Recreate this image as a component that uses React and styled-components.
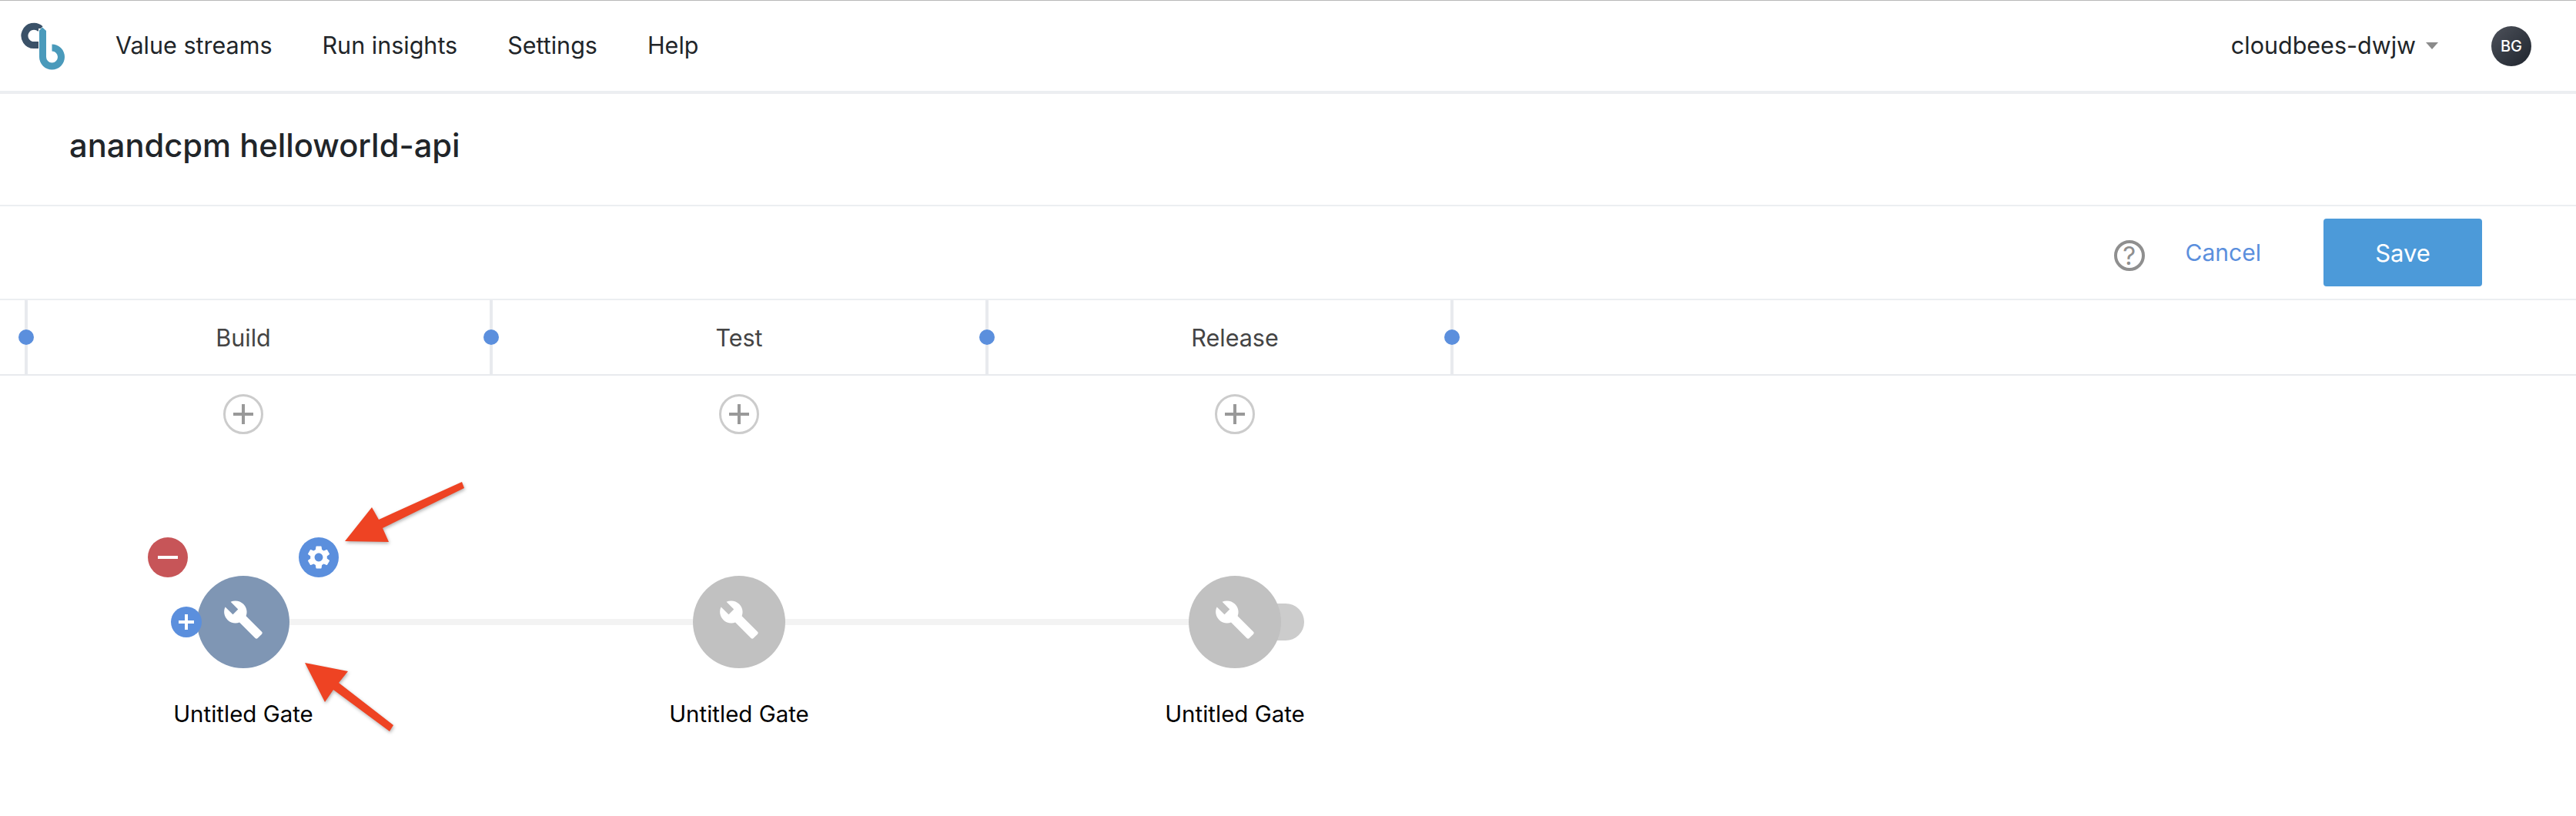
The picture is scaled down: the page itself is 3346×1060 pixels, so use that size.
import styled, { createGlobalStyle } from 'styled-components';

const NAV_ITEMS = ['Value streams', 'Run insights', 'Settings', 'Help'];
const STAGES = [
  { name: 'Build', width: 600, pad: '0 40px 0 0' },
  { name: 'Test', width: 640, pad: '0' },
  { name: 'Release', width: 600, pad: '0 0 0 40px' },
];

const GlobalStyle = createGlobalStyle`
  html, body {
    margin: 0;
    padding: 0;
    background: #fff;
  }
  body {
    font-family: Inter, "Liberation Sans", sans-serif;
    color: #212529;
  }
  * {
    box-sizing: border-box;
  }
`;

function Logo() {
  return (
    <svg width="60" height="64" viewBox="26 30 60 64" fill="none">
      <path d="M52.5 39.5A12.2 12.2 0 1 0 44 60.6H52" stroke="#3a5168" strokeWidth="9" />
      <path d="M55.5 39V76A12 12 0 1 0 67.5 64H62" stroke="#fff" strokeWidth="11" />
      <path d="M51 41.5L55 37.5L60 42V76A7.5 7.5 0 1 0 67.5 68.5V59.5A16.5 16.5 0 1 1 51 76Z" fill="#4a9abb" />
    </svg>
  );
}

function WrenchIcon() {
  return (
    <WrenchSvg width="54" height="54" viewBox="0 0 24 24" fill="#fff">
      <path d="M22.7 19l-9.1-9.1c.9-2.3.4-5-1.5-6.9-2-2-5-2.4-7.4-1.3L9 6 6 9 1.6 4.7C.4 7.1.9 10.1 2.9 12.1c1.9 1.9 4.6 2.4 6.9 1.5l9.1 9.1c.4.4 1 .4 1.4 0l2.3-2.3c.5-.4.5-1.1.1-1.4z" />
    </WrenchSvg>
  );
}

function GearIcon() {
  return (
    <svg width="36" height="36" viewBox="0 0 24 24" fill="#fff">
      <path d="M19.14 12.94c.04-.3.06-.61.06-.94 0-.32-.02-.64-.07-.94l2.03-1.58c.18-.14.23-.41.12-.61l-1.92-3.32c-.12-.22-.37-.29-.59-.22l-2.39.96c-.5-.38-1.03-.7-1.62-.94l-.36-2.54c-.04-.24-.24-.41-.48-.41h-3.84c-.24 0-.43.17-.47.41l-.36 2.54c-.59.24-1.13.57-1.62.94l-2.39-.96c-.22-.08-.47 0-.59.22L2.74 8.87c-.12.21-.08.47.12.61l2.03 1.58c-.05.3-.09.63-.09.94s.02.64.07.94l-2.03 1.58c-.18.14-.23.41-.12.61l1.92 3.32c.12.22.37.29.59.22l2.39-.96c.5.38 1.03.7 1.62.94l.36 2.54c.05.24.24.41.48.41h3.84c.24 0 .44-.17.47-.41l.36-2.54c.59-.24 1.13-.56 1.62-.94l2.39.96c.22.08.47 0 .59-.22l1.92-3.32c.12-.22.07-.47-.12-.61l-2.01-1.58zM12 15.6c-1.98 0-3.6-1.62-3.6-3.6s1.62-3.6 3.6-3.6 3.6 1.62 3.6 3.6-1.62 3.6-3.6 3.6z" />
    </svg>
  );
}

function App() {
  return (
    <Page>
      <GlobalStyle />
      <Header>
        <Logo />
        <Nav>
          {NAV_ITEMS.map((item) => (
            <NavItem key={item}>{item}</NavItem>
          ))}
        </Nav>
        <OrgName>cloudbees-dwjw</OrgName>
        <Caret />
        <Avatar>BG</Avatar>
      </Header>

      <TitleBar>
        <Title>anandcpm helloworld-api</Title>
      </TitleBar>

      <ActionBar>
        <HelpIcon>?</HelpIcon>
        <CancelLink>Cancel</CancelLink>
        <SaveButton type="button">Save</SaveButton>
      </ActionBar>

      <StageBar>
        <Boundary />
        {STAGES.map((stage) => (
          <StageGroup key={stage.name}>
            <StageName $width={stage.width} $pad={stage.pad}>
              {stage.name}
            </StageName>
            <Boundary />
          </StageGroup>
        ))}
      </StageBar>

      <Lanes>
        {STAGES.map((stage, i) => (
          <Lane key={stage.name}>
            <AddGate />
            <GateCircle $active={i === 0} $linked={i < STAGES.length - 1}>
              <WrenchIcon />
              {i === 0 && (
                <>
                  <RemoveBadge />
                  <SettingsBadge>
                    <GearIcon />
                  </SettingsBadge>
                  <PrependBadge />
                </>
              )}
              {i === STAGES.length - 1 && <EndTail />}
            </GateCircle>
            <GateLabel>Untitled Gate</GateLabel>
          </Lane>
        ))}
      </Lanes>

      <Annotations width="3346" height="1060" viewBox="0 0 3346 1060">
        <polygon points="448,703 483,659 492,675 600,626 603,634 497,686 505,704" />
        <polygon points="396,861 452,872 440,887 511,942 506,950 433,896 422,912" />
      </Annotations>
    </Page>
  );
}

const Page = styled.div`
  position: relative;
  isolation: isolate;
  width: 3346px;
  height: 1060px;
  overflow: hidden;
  background: #fff;
`;

const Header = styled.header`
  height: 122px;
  display: flex;
  align-items: center;
  padding: 0 58px 0 26px;
  border-top: 1px solid #b8b8b8;
  border-bottom: 4px solid #eceef1;
`;

const Nav = styled.nav`
  display: flex;
  gap: 65px;
  margin-left: 64px;
  flex: 1;
`;

const NavItem = styled.span`
  font-size: 30.5px;
  line-height: 38px;
  padding-bottom: 2px;
  color: #212529;
`;

const OrgName = styled.span`
  font-size: 30.5px;
  line-height: 38px;
  padding-bottom: 2px;
  color: #212529;
`;

const Caret = styled.span`
  width: 0;
  height: 0;
  margin: 0 69px 0 13px;
  border-left: 8px solid transparent;
  border-right: 8px solid transparent;
  border-top: 9px solid #8b8b8b;
`;

const Avatar = styled.span`
  width: 52px;
  height: 52px;
  display: flex;
  align-items: center;
  justify-content: center;
  border-radius: 50%;
  background: linear-gradient(135deg, #4d515a, #1f252e);
  color: #fff;
  font-size: 20px;
  font-weight: 500;
`;

const TitleBar = styled.div`
  height: 146px;
  display: flex;
  align-items: center;
  padding: 0 0 10px 90px;
  border-bottom: 2px solid #eceef1;
`;

const Title = styled.h1`
  margin: 0;
  font-size: 41.7px;
  font-weight: 500;
  line-height: 50px;
  color: #212529;
`;

const ActionBar = styled.div`
  height: 120px;
  display: flex;
  align-items: center;
  justify-content: flex-end;
  padding-right: 122px;
`;

const HelpIcon = styled.span`
  width: 40px;
  height: 40px;
  display: flex;
  align-items: center;
  justify-content: center;
  margin-right: 53px;
  margin-top: 8px;
  border: 4px solid #8f8f8f;
  border-radius: 50%;
  color: #8f8f8f;
  font-size: 33px;
  line-height: 1;
  font-weight: 400;
`;

const CancelLink = styled.a`
  margin-right: 81px;
  font-size: 30px;
  color: #5b8fdd;
`;

const SaveButton = styled.button`
  width: 206px;
  height: 88px;
  border: none;
  border-radius: 4px;
  background: #4c9ad9;
  color: #fff;
  font-family: inherit;
  font-size: 31px;
  font-weight: 400;
`;

const StageBar = styled.div`
  height: 100px;
  display: flex;
  padding-left: 32px;
  border-top: 2px solid #eceef1;
  border-bottom: 2px solid #e8eaee;
`;

const StageGroup = styled.div`
  display: flex;
`;

const Boundary = styled.span`
  position: relative;
  width: 4px;
  background: #e8eaee;

  &::after {
    content: '';
    position: absolute;
    top: 50%;
    left: 50%;
    width: 20px;
    height: 20px;
    border-radius: 50%;
    background: #5b8fdd;
    transform: translate(-50%, -50%);
  }
`;

const StageName = styled.div`
  width: ${(p) => p.$width}px;
  display: flex;
  align-items: center;
  justify-content: center;
  padding: ${(p) => p.$pad};
  font-size: 30.5px;
  color: #444;
`;

const Lanes = styled.div`
  display: flex;
  margin-left: -6px;
  padding-top: 24px;
`;

const Lane = styled.div`
  width: 644px;
  display: flex;
  flex-direction: column;
  align-items: center;
`;

const AddGate = styled.span`
  position: relative;
  width: 52px;
  height: 52px;
  border: 3px solid #ccc;
  border-radius: 50%;

  &::before,
  &::after {
    content: '';
    position: absolute;
    top: 50%;
    left: 50%;
    background: #999;
    transform: translate(-50%, -50%);
  }
  &::before {
    width: 26px;
    height: 4px;
  }
  &::after {
    width: 4px;
    height: 26px;
  }
`;

const GateCircle = styled.div`
  position: relative;
  width: 120px;
  height: 120px;
  display: flex;
  align-items: center;
  justify-content: center;
  margin-top: 184px;
  border-radius: 50%;
  background: ${(p) => (p.$active ? '#7f96b4' : '#c1c1c1')};

  &::before {
    content: ${(p) => (p.$linked ? "''" : 'none')};
    position: absolute;
    z-index: -1;
    top: 56px;
    left: 60px;
    width: 644px;
    height: 8px;
    background: #f3f3f3;
  }
`;

const WrenchSvg = styled.svg`
  margin-bottom: 6px;
`;

const Badge = styled.span`
  position: absolute;
  display: flex;
  align-items: center;
  justify-content: center;
  border-radius: 50%;
`;

const RemoveBadge = styled(Badge)`
  top: -50px;
  left: -64px;
  width: 52px;
  height: 52px;
  background: #c75558;

  &::after {
    content: '';
    width: 26px;
    height: 4px;
    background: #fff;
  }
`;

const SettingsBadge = styled(Badge)`
  top: -50px;
  left: 132px;
  width: 52px;
  height: 52px;
  background: #5b8fdd;
`;

const PrependBadge = styled(Badge)`
  top: 40px;
  left: -34px;
  width: 40px;
  height: 40px;
  background: #5b8fdd;

  &::before,
  &::after {
    content: '';
    position: absolute;
    top: 50%;
    left: 50%;
    background: #fff;
    transform: translate(-50%, -50%);
  }
  &::before {
    width: 20px;
    height: 4px;
  }
  &::after {
    width: 4px;
    height: 20px;
  }
`;

const EndTail = styled.span`
  position: absolute;
  z-index: -1;
  top: 36px;
  left: 80px;
  width: 70px;
  height: 48px;
  border-radius: 24px;
  background: #ccc;
`;

const GateLabel = styled.div`
  margin-top: 41px;
  font-size: 29.5px;
  line-height: 36px;
  color: #000;
`;

const Annotations = styled.svg`
  position: absolute;
  top: 0;
  left: 0;
  pointer-events: none;
  fill: #ee4323;
  filter: drop-shadow(1px 2px 2px rgba(0, 0, 0, 0.3));
`;

export default App;
